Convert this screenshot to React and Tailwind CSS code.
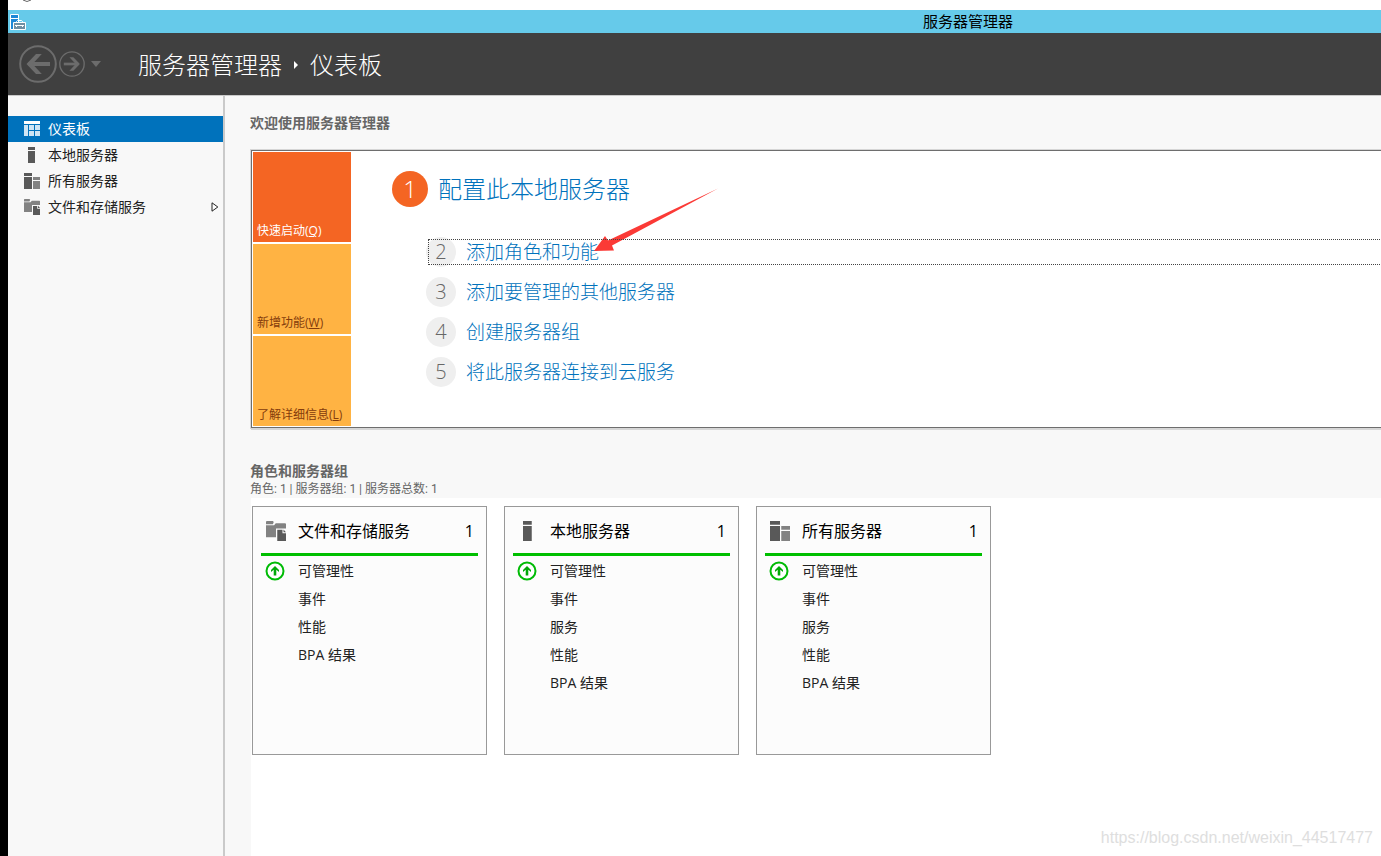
import clsx from "clsx";

const navItems = [
  { id: "dashboard", label: "仪表板", icon: DashboardIcon, active: true },
  { id: "local", label: "本地服务器", icon: ServerIcon },
  { id: "all", label: "所有服务器", icon: ServersIcon },
  { id: "storage", label: "文件和存储服务", icon: StorageIcon, more: true },
];

const tabs = [
  { id: "quick", label: "快速启动", hotkey: "Q", active: true },
  { id: "news", label: "新增功能", hotkey: "W" },
  { id: "learn", label: "了解详细信息", hotkey: "L" },
];

const steps = [
  { number: 2, label: "添加角色和功能", focused: true },
  { number: 3, label: "添加要管理的其他服务器" },
  { number: 4, label: "创建服务器组" },
  { number: 5, label: "将此服务器连接到云服务" },
];

const groups = [
  { id: "storage", title: "文件和存储服务", icon: StorageIcon, count: 1, items: ["可管理性", "事件", "性能", "BPA 结果"] },
  { id: "local", title: "本地服务器", icon: ServerIcon, count: 1, items: ["可管理性", "事件", "服务", "性能", "BPA 结果"] },
  { id: "all", title: "所有服务器", icon: ServersIcon, count: 1, items: ["可管理性", "事件", "服务", "性能", "BPA 结果"] },
];

function DashboardIcon({ className }) {
  return (
    <svg className={className} viewBox="0 0 16 16" shapeRendering="crispEdges" aria-hidden="true">
      <path fill="#fff" d="M0 0h16v3H0z" />
      <path fill="#cfe5f4" d="M0 4h4v11H0zM5 4h5v5H5zM11 4h5v5h-5zM5 10h5v5H5zM11 10h5v5h-5z" />
    </svg>
  );
}

function ServerIcon({ className }) {
  return (
    <svg className={className} viewBox="0 0 16 16" aria-hidden="true">
      <path fill="#595959" d="M4 0h7v3H4zM4 4h7v12H4z" />
    </svg>
  );
}

function ServersIcon({ className }) {
  return (
    <svg className={className} viewBox="0 0 16 16" aria-hidden="true">
      <path fill="#595959" d="M0 0h8v3H0zM0 4h8v12H0z" />
      <path fill="#828282" d="M9 4h7v3H9zM9 8h7v8H9z" />
    </svg>
  );
}

function StorageIcon({ className }) {
  return (
    <svg className={className} viewBox="0 0 16 16" aria-hidden="true">
      <path fill="#828282" d="M.5 0h5l.7.8-.7 1.700H0V.5zM0 3.300h6.500L7.800 1.800H15.500l.5.500V6H8v7H0z" />
      <path fill="#595959" d="M9 7h4.200v2.800H16V16H9z" />
      <path fill="#595959" d="M14 6.800 16 9h-2z" />
    </svg>
  );
}

function AppIcon() {
  return (
    <svg className="size-4" viewBox="0 0 16 16" aria-hidden="true">
      <path fill="#1e88d6" stroke="#fff" d="M.5.5h8v15h-8z" />
      <path stroke="#fff" d="M1 4.500h7" />
      <path fill="#66caea" d="M9 1h1v5H9z" />
      <path fill="none" stroke="#fff" d="M6.500 9V7.500l1-1h4l1 1V9" />
      <path fill="#6f8fa3" stroke="#fff" d="M3.500 8.500h12v7h-12z" />
      <path stroke="#fff" d="M5 11.500h9" />
      <path stroke="#fff" d="M6.500 11v2M12.500 11v2" />
    </svg>
  );
}

function ArrowCircle({ className, flip }) {
  return (
    <svg className={className} viewBox="0 0 38 38" fill="none" stroke="#6c6c6c" aria-hidden="true">
      <circle cx="19" cy="19" r="17.800" strokeWidth="2" />
      <g transform={flip ? "rotate(180 19 19)" : undefined}>
        <path strokeWidth="4" d="M9.500 19H31" />
        <path fill="#6c6c6c" stroke="none" d="M17 9h5.800l-9.300 10 9.300 10H17L7.500 19z" />
      </g>
    </svg>
  );
}

function StatusUpIcon() {
  return (
    <svg className="size-5" viewBox="0 0 20 20" aria-hidden="true">
      <circle cx="10" cy="10" r="8.500" fill="#fff" stroke="#00bb06" strokeWidth="2" />
      <path fill="#00a808" d="M10 5l4 4v2l-2.700-2.300V14.500H8.700V8.700L6 11V9z" />
    </svg>
  );
}

function TitleBar() {
  return (
    <div className="grid h-[23px] grid-cols-[1fr_auto_1fr] items-center bg-[#66caea] pl-0.5 text-black">
      <AppIcon />
      <span className="pb-px pl-[545px] text-[15px] leading-5">服务器管理器</span>
      <span />
    </div>
  );
}

function Header() {
  return (
    <header className="flex h-[62px] items-center bg-[#404040] pl-[11px] text-white">
      <button type="button" aria-label="后退">
        <ArrowCircle className="size-[38px]" />
      </button>
      <button type="button" aria-label="前进" className="ml-0.5">
        <ArrowCircle className="size-[26px]" flip />
      </button>
      <button type="button" aria-label="历史记录" className="ml-1.5">
        <svg className="h-1.5 w-2.5" viewBox="0 0 10 6" aria-hidden="true">
          <path fill="#6c6c6c" d="M0 0h10L5 6z" />
        </svg>
      </button>
      <h1 className="ml-[37px] flex items-center pt-0.5 text-2xl font-light">
        <span>服务器管理器</span>
        <svg className="mx-3 h-2 w-1" viewBox="0 0 4 8" aria-hidden="true">
          <path fill="#fff" d="M0 0l4 4-4 4z" />
        </svg>
        <span>仪表板</span>
      </h1>
    </header>
  );
}

function Sidebar() {
  return (
    <nav className="w-[217px] shrink-0 border-r-2 border-[#cacaca] pt-5 text-sm text-[#222]">
      {navItems.map(({ id, label, icon: Icon, active, more }) => (
        <a
          key={id}
          href={`#${id}`}
          className={clsx("flex h-[26px] items-center pr-1 pl-4", active && "bg-[#0072bc] text-white")}
        >
          <Icon className="size-4" />
          <span className="ml-2 flex-1">{label}</span>
          {more && (
            <svg className="h-2.5 w-2" viewBox="0 0 8 10" aria-hidden="true">
              <path fill="#fff" stroke="#222" d="M1 .8l5.800 4.200L1 9.200z" />
            </svg>
          )}
        </a>
      ))}
    </nav>
  );
}

function Pointer() {
  return (
    <svg className="absolute top-[-49px] left-[128px] h-[66px] w-[126px]" viewBox="0 0 126 66" aria-hidden="true">
      <path fill="#fb3a36" d="M0 63 11 48l3 4.500L124 .5 18 57.500l2 5z" />
    </svg>
  );
}

function Welcome() {
  return (
    <section className="flex border border-r-0 border-[#6e6e6e] bg-white p-px shadow-[0_0_0_1px_#d6d6d6,0_2px_0_0_#d6d6d6]">
      <div className="flex w-[98px] shrink-0 flex-col gap-0.5">
        {tabs.map((tab) => (
          <button
            key={tab.id}
            type="button"
            className={clsx(
              "flex h-[90px] items-end pb-px pl-1 text-xs leading-5",
              tab.active ? "bg-[#f46523] text-white" : "bg-[#ffb343] text-[#843c0c]"
            )}
          >
            {tab.label}(<u>{tab.hotkey}</u>)
          </button>
        ))}
      </div>
      <div className="flex-1 pt-[19px] font-light">
        <a href="#configure" className="ml-[41px] flex items-center text-2xl leading-9 text-[#0072bc]">
          <span className="mr-2.5 flex size-9 items-center justify-center rounded-full bg-[#f46523] text-white">1</span>
          配置此本地服务器
        </a>
        <ol className="mt-[25px] ml-[75px]">
          {steps.map((step) => (
            <li key={step.number}>
              <a href={`#step-${step.number}`} className="relative flex h-10 items-center text-[19px] text-[#0072bc]">
                <span className="mr-2.5 flex size-[30px] items-center justify-center rounded-full bg-[#efefef] text-xl text-[#666]">
                  {step.number}
                </span>
                <span className="relative pt-px">
                  {step.label}
                  {step.focused && <Pointer />}
                </span>
                {step.focused && (
                  <span className="absolute inset-y-[7px] right-0 left-0.5 border border-r-0 border-dotted border-[#444]" />
                )}
              </a>
            </li>
          ))}
        </ol>
      </div>
    </section>
  );
}

function GroupCard({ group }) {
  const Icon = group.icon;
  return (
    <article className="h-[249px] w-[235px] border border-[#999] bg-[#fcfcfc] px-2">
      <header className="flex h-[49px] items-center border-b-3 border-[#00bf00] pt-0.5 pr-1 pl-[5px] text-base text-black">
        <Icon className="size-5" />
        <h3 className="ml-3 flex-1">{group.title}</h3>
        <span>{group.count}</span>
      </header>
      <ul className="pt-px text-sm text-[#222]">
        {group.items.map((item, i) => (
          <li key={item} className="flex h-7 items-center pl-1">
            <span className="mr-[13px] w-5">{i === 0 && <StatusUpIcon />}</span>
            <a href={`#${group.id}`}>{item}</a>
          </li>
        ))}
      </ul>
    </article>
  );
}

export default function App() {
  return (
    <div className="flex min-h-screen flex-col overflow-x-hidden border-l-8 border-black bg-[#f8f8f8] font-['Open_Sans','Noto_Sans_CJK_SC',sans-serif]">
      <div className="flex h-2.5 items-start bg-white pl-[15px]">
        <svg className="h-0.5 w-2" viewBox="0 0 8 2" aria-hidden="true">
          <path fill="none" stroke="#666" d="M0 0q4 3 8 0" />
        </svg>
      </div>
      <TitleBar />
      <Header />
      <div className="flex flex-1 border-t border-[#cacaca]">
        <Sidebar />
        <main className="flex min-w-0 flex-1 flex-col pl-[26px]">
          <h2 className="-ml-px pt-[17px] pb-[17px] text-sm font-bold text-[#666]">欢迎使用服务器管理器</h2>
          <Welcome />
          <div className="-ml-px pt-[33px] text-[#666]">
            <h2 className="text-sm font-bold">角色和服务器组</h2>
            <p className="pb-px font-[Roboto,'Noto_Sans_CJK_SC',sans-serif] text-xs">
              角色: 1 | 服务器组: 1 | 服务器总数: 1
            </p>
          </div>
          <div className="relative flex flex-1 flex-wrap content-start gap-[17px] bg-white pt-2 pl-px">
            {groups.map((group) => (
              <GroupCard key={group.id} group={group} />
            ))}
            <span className="absolute right-2 bottom-2 font-['Liberation_Sans',sans-serif] text-base leading-5 text-[#dedede]">
              https://blog.csdn.net/weixin_44517477
            </span>
          </div>
        </main>
      </div>
    </div>
  );
}
